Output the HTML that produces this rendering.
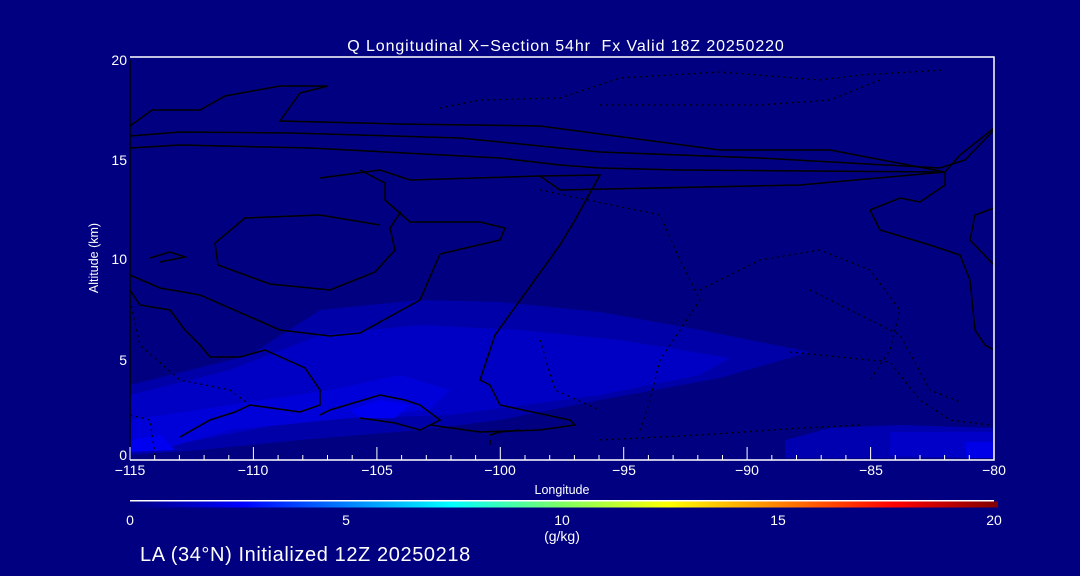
<!DOCTYPE html>
<html><head><meta charset="utf-8"><style>
html,body{margin:0;padding:0;background:#000080;width:1080px;height:576px;overflow:hidden}
svg{display:block}
text{font-family:"Liberation Sans","DejaVu Sans",sans-serif;fill:#fff}
</style></head><body>
<svg width="1080" height="576" viewBox="0 0 1080 576">
<defs>
<linearGradient id="cb" x1="0" x2="1">
<stop offset="0" stop-color="#000080"/>
<stop offset="0.13" stop-color="#0000ff"/>
<stop offset="0.37" stop-color="#00ffff"/>
<stop offset="0.5" stop-color="#80ff60"/>
<stop offset="0.62" stop-color="#ffff00"/>
<stop offset="0.88" stop-color="#ff0000"/>
<stop offset="1" stop-color="#800000"/>
</linearGradient>
</defs>
<rect width="1080" height="576" fill="#000080"/>
<path d="M130 385 L250 355 L320 310 L420 300 L500 302 L600 312 L700 330 L810 352 L720 378 L600 400 L500 420 L420 430 L300 440 L200 450 L130 455 Z" fill="#0000a8"/>
<path d="M130 395 L230 370 L320 335 L420 325 L520 330 L620 340 L730 358 L700 375 L600 395 L450 415 L300 420 L200 440 L130 448 Z" fill="#0000c4"/>
<path d="M130 420 L230 405 L330 390 L400 375 L450 390 L430 410 L330 420 L230 430 L160 450 L130 452 Z" fill="#0000d8"/>
<path d="M350 410 L380 400 L410 405 L395 418 L360 418 Z" fill="#0000f0"/>
<path d="M130 440 L160 435 L175 450 L130 452 Z" fill="#0000f0"/>
<path d="M785 440 L830 428 L900 425 L994 428 L994 458 L785 458 Z" fill="#0000b0"/>
<path d="M890 432 L994 432 L994 458 L890 456 Z" fill="#0000c8"/>
<path d="M966 442 L994 442 L994 458 L966 458 Z" fill="#0000e8"/>
<g fill="none" stroke="#000" stroke-width="1.5">
<path d="M130 126 L152 110 L200 110 L225 96 L280 86 L328 86 L300 93 L280 121 L400 124 L540 126 L720 150 L830 150 L945 172"/>
<path d="M130 136 L180 132 L290 133 L360 135 L460 138 L600 152 L760 158 L940 168 L965 160 L994 130"/>
<path d="M130 148 L180 145 L310 148 L500 158 L560 165 L600 168 L680 170 L940 172"/>
<path d="M320 178 L380 170 L410 180 L540 176 L560 190 L800 185 L945 172"/>
<path d="M130 275 L160 288 L200 295 L280 330 L330 336 L360 333 L420 300 L440 254 L500 240 L505 228 L480 222 L410 222 L385 200 L385 183 L360 170"/>
<path d="M400 215 L400 213 L390 228 L395 250 L375 272 L330 290 L270 284 L218 265 L215 243 L245 218 L320 215 L380 225"/>
<path d="M130 290 L140 305 L170 310 L185 330 L200 345 L210 357 L240 357 L265 350 L305 368 L320 390 L320 405 L300 412 L250 405 L235 412 L210 420 L180 437"/>
<path d="M130 455 L130 60"/>
<path d="M320 415 L330 410 L380 395 L405 400 L420 405 L440 420 L420 430 L395 423 L360 418"/>
<path d="M430 425 L480 432 L540 430 L575 425 L570 420 L500 405 L490 385 L480 380 L495 335 L560 245 L575 220 L600 175 L540 176"/>
<path d="M490 435 L500 432 L520 430 M490 440 L490 445"/>
<path d="M150 258 L170 252 L185 257 L160 262"/>
<path d="M870 210 L900 198 L920 202 L945 185 L945 172 L960 155 L994 128"/>
<path d="M994 208 L975 215 L970 240 L994 265"/>
<path d="M870 210 L880 230 L930 245 L960 255 L970 280 L975 330 L985 345 L994 350"/>
</g>
<g fill="none" stroke="#000" stroke-width="1.3" stroke-dasharray="2 4">
<path d="M440 108 L480 100 L560 98 L620 78 L720 72 L820 80 L860 75 L945 70"/>
<path d="M600 105 L760 105 L830 100 L880 80"/>
<path d="M540 190 L660 215 L680 260 L700 300 L680 330 L660 360 L650 400 L640 430"/>
<path d="M700 290 L760 260 L820 250 L870 270 L900 310 L890 350 L870 380"/>
<path d="M130 300 L140 345 L180 380 L230 390 L250 405"/>
<path d="M790 352 L890 362 L920 400 L950 420 L990 425"/>
<path d="M600 440 L700 435 L800 428 L860 425"/>
<path d="M130 415 L150 420 L155 455 M540 340 L555 390 L600 410"/>
<path d="M810 290 L900 335 L930 390 L960 402"/>
</g>
<g stroke="#fff" stroke-width="1.5" fill="none">
<path d="M130 57 L994 57 L994 460 L130 460"/>
</g>
<g stroke="#fff" stroke-width="1">
<path d="M130 460V447M253.4 460V447M376.9 460V447M500.3 460V447M623.7 460V447M747.1 460V447M870.6 460V447M994 460V447"/>
<path d="M154.7 460V455M179.4 460V455M204.1 460V455M228.8 460V455M278.1 460V455M302.8 460V455M327.5 460V455M352.2 460V455M401.6 460V455M426.3 460V455M451 460V455M475.6 460V455M525 460V455M549.7 460V455M574.4 460V455M599 460V455M648.4 460V455M673.1 460V455M697.8 460V455M722.5 460V455M771.8 460V455M796.5 460V455M821.2 460V455M845.9 460V455M895.3 460V455M920 460V455M944.6 460V455M969.3 460V455"/>
</g>
<g font-size="14" text-anchor="middle">
<text x="130" y="475">−115</text>
<text x="253" y="475">−110</text>
<text x="377" y="475">−105</text>
<text x="500" y="475">−100</text>
<text x="624" y="475">−95</text>
<text x="747" y="475">−90</text>
<text x="871" y="475">−85</text>
<text x="994" y="475">−80</text>
</g>
<g font-size="14" text-anchor="end">
<text x="127" y="65">20</text>
<text x="127" y="165">15</text>
<text x="127" y="264">10</text>
<text x="127" y="365">5</text>
<text x="127" y="460">0</text>
</g>
<text x="562" y="494" font-size="12.5" text-anchor="middle">Longitude</text>
<text x="98" y="258" font-size="12.5" text-anchor="middle" transform="rotate(-90 98 258)">Altitude (km)</text>
<text x="566" y="51" font-size="16" letter-spacing="0.9" text-anchor="middle" xml:space="preserve">Q Longitudinal X−Section 54hr  Fx Valid 18Z 20250220</text>
<rect x="130" y="500" width="864" height="1.5" fill="#fff"/>
<rect x="130" y="501.5" width="868" height="6" fill="url(#cb)"/>
<g font-size="14" text-anchor="middle">
<text x="130" y="525">0</text>
<text x="346" y="525">5</text>
<text x="562" y="525">10</text>
<text x="778" y="525">15</text>
<text x="994" y="525">20</text>
<text x="562" y="541">(g/kg)</text>
</g>
<text x="140" y="561" font-size="20" letter-spacing="0.6">LA (34°N) Initialized 12Z 20250218</text>
</svg>
</body></html>
